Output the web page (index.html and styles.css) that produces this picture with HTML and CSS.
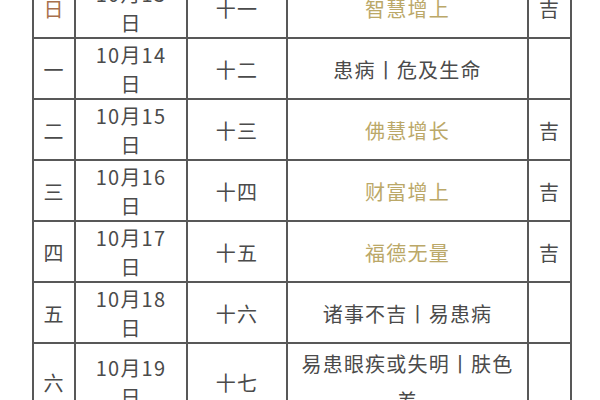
FILE: index.html
```html
<!DOCTYPE html>
<html lang="zh-CN">
<head>
<meta charset="utf-8">
<title>十斋日</title>
<link rel="stylesheet" href="styles.css">
</head>
<body>
<main class="page">
  <table class="calendar">
    <colgroup>
      <col class="c-week">
      <col class="c-date">
      <col class="c-lunar">
      <col class="c-desc">
      <col class="c-luck">
    </colgroup>
    <tbody>
      <tr>
        <td class="week sunday">日</td>
        <td class="date">10月13日</td>
        <td class="lunar">十一</td>
        <td class="desc good">智慧增上</td>
        <td class="luck">吉</td>
      </tr>
      <tr>
        <td class="week">一</td>
        <td class="date">10月14日</td>
        <td class="lunar">十二</td>
        <td class="desc">患病丨危及生命</td>
        <td class="luck"></td>
      </tr>
      <tr>
        <td class="week">二</td>
        <td class="date">10月15日</td>
        <td class="lunar">十三</td>
        <td class="desc good">佛慧增长</td>
        <td class="luck">吉</td>
      </tr>
      <tr>
        <td class="week">三</td>
        <td class="date">10月16日</td>
        <td class="lunar">十四</td>
        <td class="desc good">财富增上</td>
        <td class="luck">吉</td>
      </tr>
      <tr>
        <td class="week">四</td>
        <td class="date">10月17日</td>
        <td class="lunar">十五</td>
        <td class="desc good">福德无量</td>
        <td class="luck">吉</td>
      </tr>
      <tr>
        <td class="week">五</td>
        <td class="date">10月18日</td>
        <td class="lunar">十六</td>
        <td class="desc">诸事不吉丨易患病</td>
        <td class="luck"></td>
      </tr>
      <tr>
        <td class="week">六</td>
        <td class="date">10月19日</td>
        <td class="lunar">十七</td>
        <td class="desc">易患眼疾或失明丨肤色差</td>
        <td class="luck"></td>
      </tr>
    </tbody>
  </table>
</main>
</body>
</html>
```

FILE: styles.css
```css
html, body {
  margin: 0;
  padding: 0;
  background: #ffffff;
}

.page {
  padding-left: 32px;
  margin-top: -24px;
}

.calendar {
  border-collapse: collapse;
  table-layout: fixed;
  width: 538px;
  font-family: "Noto Sans CJK SC", "Noto Sans", sans-serif;
  font-size: 20px;
  letter-spacing: 1.2px;
  color: #4b4b4b;
}

.c-week { width: 42px; }
.c-date { width: 112px; }
.c-lunar { width: 100px; }
.c-desc { width: 241px; }
.c-luck { width: 43px; }

.calendar td {
  border: 2px solid #585858;
  text-align: center;
  vertical-align: middle;
  line-height: 29px;
  padding: 1px 0 0 0;
}

.calendar td.date {
  padding-left: 12px;
  padding-right: 12px;
}

.calendar td.desc {
  line-height: 37px;
  padding-left: 8px;
  padding-right: 8px;
}

.sunday {
  color: #a8704c;
}

.good {
  color: #bba868;
}
```
